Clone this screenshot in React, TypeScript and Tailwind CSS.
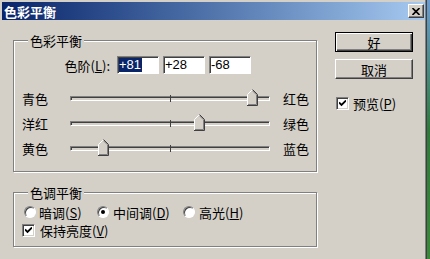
import React from "react";

const cjk = { fontFamily: "'Noto Sans CJK SC', 'Liberation Sans', sans-serif" };

const Thumb: React.FC<{ value: number }> = ({ value }) => {
  // track is 200px wide, -100..100
  const left = 100 + value - 5;
  return (
    <svg
      width="11"
      height="17"
      viewBox="0 0 11 17"
      className="absolute top-[-8px]"
      style={{ left }}
    >
      <polygon points="5.5,0 11,5.5 11,17 0,17 0,5.5" fill="#d4d0c8" />
      <polyline points="0.5,16 0.5,5.5 5.5,0.5" stroke="#ffffff" fill="none" />
      <polyline points="5.5,0.5 10.5,5.5 10.5,16.5 0,16.5" stroke="#404040" fill="none" />
      <polyline points="5.5,1.8 9.5,5.8 9.5,15.5 1,15.5" stroke="#808080" fill="none" />
    </svg>
  );
};

const SliderRow: React.FC<{ left: string; right: string; value: number }> = ({ left, right, value }) => (
  <div className="flex h-[25px] items-center">
    <span className="w-[48px] text-[13px] leading-[15px]">{left}</span>
    <div className="relative w-[200px] h-[5px] border border-t-[#808080] border-l-[#808080] border-b-white border-r-white bg-[#d4d0c8] shadow-[inset_1px_1px_0_#404040]">
      <div className="absolute left-[99px] top-[-2px] w-px h-[7px] bg-[#404040]" />
      <Thumb value={value} />
    </div>
    <span className="ml-[13px] text-[13px] leading-[15px]">{right}</span>
  </div>
);

const Check: React.FC = () => (
  <span className="flex w-[13px] h-[13px] items-center justify-center bg-white border border-t-[#808080] border-l-[#808080] border-b-white border-r-white shadow-[inset_1px_1px_0_#404040,inset_-1px_-1px_0_#d4d0c8]">
    <svg width="7" height="7" viewBox="0 0 7 7">
      <path d="M0 2.5 L2.5 5 L7 0.5" stroke="#000" strokeWidth="1.8" fill="none" />
    </svg>
  </span>
);

const Radio: React.FC<{ on?: boolean }> = ({ on }) => (
  <span className="relative flex w-[12px] h-[12px] items-center justify-center rounded-full bg-white border border-t-[#808080] border-l-[#808080] border-b-white border-r-white shadow-[inset_1px_1px_0_#404040]">
    {on && <span className="w-[4px] h-[4px] rounded-full bg-black" />}
  </span>
);

const Field: React.FC<{ children: React.ReactNode }> = ({ children }) => (
  <div className="w-[42px] h-[18px] flex items-center bg-white border border-t-[#808080] border-l-[#808080] border-b-white border-r-white shadow-[inset_1px_1px_0_#404040] pl-[1px] text-[13px] leading-[14px] font-['Liberation_Sans',sans-serif]">
    {children}
  </div>
);

export default function App() {
  return (
    <div className="flex w-[430px] h-[259px] overflow-hidden text-black" style={cjk}>
      <div className="w-[427px] h-[259px] bg-[#d4d0c8] pt-[2px] pl-[2px] pr-[2px] shadow-[inset_-1px_0_0_#404040,inset_-2px_0_0_#808080]">
        {/* title bar */}
        <div className="flex h-[18px] items-center justify-between bg-gradient-to-r from-[#0a246a] to-[#a6caf0] pl-[2px] pr-[1px]">
          <span className="text-white font-bold text-[13px] leading-[15px]">色彩平衡</span>
          <span className="flex w-[16px] h-[14px] items-center justify-center bg-[#d4d0c8] border border-t-white border-l-white border-b-[#404040] border-r-[#404040] shadow-[inset_-1px_-1px_0_#808080]">
            <svg width="8" height="7" viewBox="0 0 8 7">
              <path d="M0.5 0 L7.5 7 M7.5 0 L0.5 7" stroke="#000" strokeWidth="1.6" />
            </svg>
          </span>
        </div>

        <div className="flex">
          {/* left column */}
          <div className="pl-[11px] pt-[20px]">
            <div className="relative w-[304px] h-[132px] border border-[#808080] shadow-[1px_1px_0_#fff,inset_1px_1px_0_#fff] pl-[8px] pt-[15px]">
              <span className="absolute left-[14px] top-[-8px] bg-[#d4d0c8] px-[2px] text-[13px] leading-[15px]">色彩平衡</span>
              <div className="flex items-center gap-[4px]">
                <span className="w-[91px] text-right text-[13px] leading-[15px] pr-[3px]">
                  色阶(<u>L</u>):
                </span>
                <Field>
                  <span className="bg-[#0a246a] text-white pr-[1px]">+81</span>
                </Field>
                <Field>+28</Field>
                <Field>-68</Field>
              </div>
              <div className="mt-[12px]">
                <SliderRow left="青色" right="红色" value={81} />
                <SliderRow left="洋红" right="绿色" value={28} />
                <SliderRow left="黄色" right="蓝色" value={-68} />
              </div>
            </div>

            <div className="relative mt-[20px] w-[304px] h-[55px] border border-[#808080] shadow-[1px_1px_0_#fff,inset_1px_1px_0_#fff] pl-[8px] pt-[10px]">
              <span className="absolute left-[14px] top-[-8px] bg-[#d4d0c8] px-[2px] text-[13px] leading-[15px]">色调平衡</span>
              <div className="flex h-[18px] items-center text-[13px] leading-[15px]">
                <div className="flex w-[75px] items-center pl-[2px]">
                  <Radio />
                  <span className="ml-[3px]">暗调(<u>S</u>)</span>
                </div>
                <div className="flex w-[86px] items-center">
                  <Radio on />
                  <span className="ml-[4px]">中间调(<u>D</u>)</span>
                </div>
                <div className="flex items-center">
                  <Radio />
                  <span className="ml-[4px]">高光(<u>H</u>)</span>
                </div>
              </div>
              <div className="flex h-[18px] items-center text-[13px] leading-[15px]">
                <Check />
                <span className="ml-[5px]">保持亮度(<u>V</u>)</span>
              </div>
            </div>
          </div>

          {/* right column */}
          <div className="ml-[18px] pt-[12px] flex flex-col">
            <button className="w-[78px] h-[20px] flex items-center justify-center border border-black bg-[#d4d0c8] shadow-[inset_1px_1px_0_#fff,inset_-1px_-1px_0_#404040,inset_-2px_-2px_0_#808080] text-[13px] leading-[15px]">
              好
            </button>
            <button className="mt-[7px] w-[78px] h-[20px] flex items-center justify-center border border-t-white border-l-white border-b-[#404040] border-r-[#404040] bg-[#d4d0c8] shadow-[inset_-1px_-1px_0_#808080] text-[13px] leading-[15px]">
              取消
            </button>
            <div className="mt-[17px] ml-[1px] flex items-center text-[13px] leading-[15px]">
              <Check />
              <span className="ml-[4px]">预览(<u>P</u>)</span>
            </div>
          </div>
        </div>
      </div>
      <div className="w-[3px] h-[259px] bg-gradient-to-b from-[#6a9ad0] via-[#2f7a3a] to-[#3a8a3a]" />
    </div>
  );
}
